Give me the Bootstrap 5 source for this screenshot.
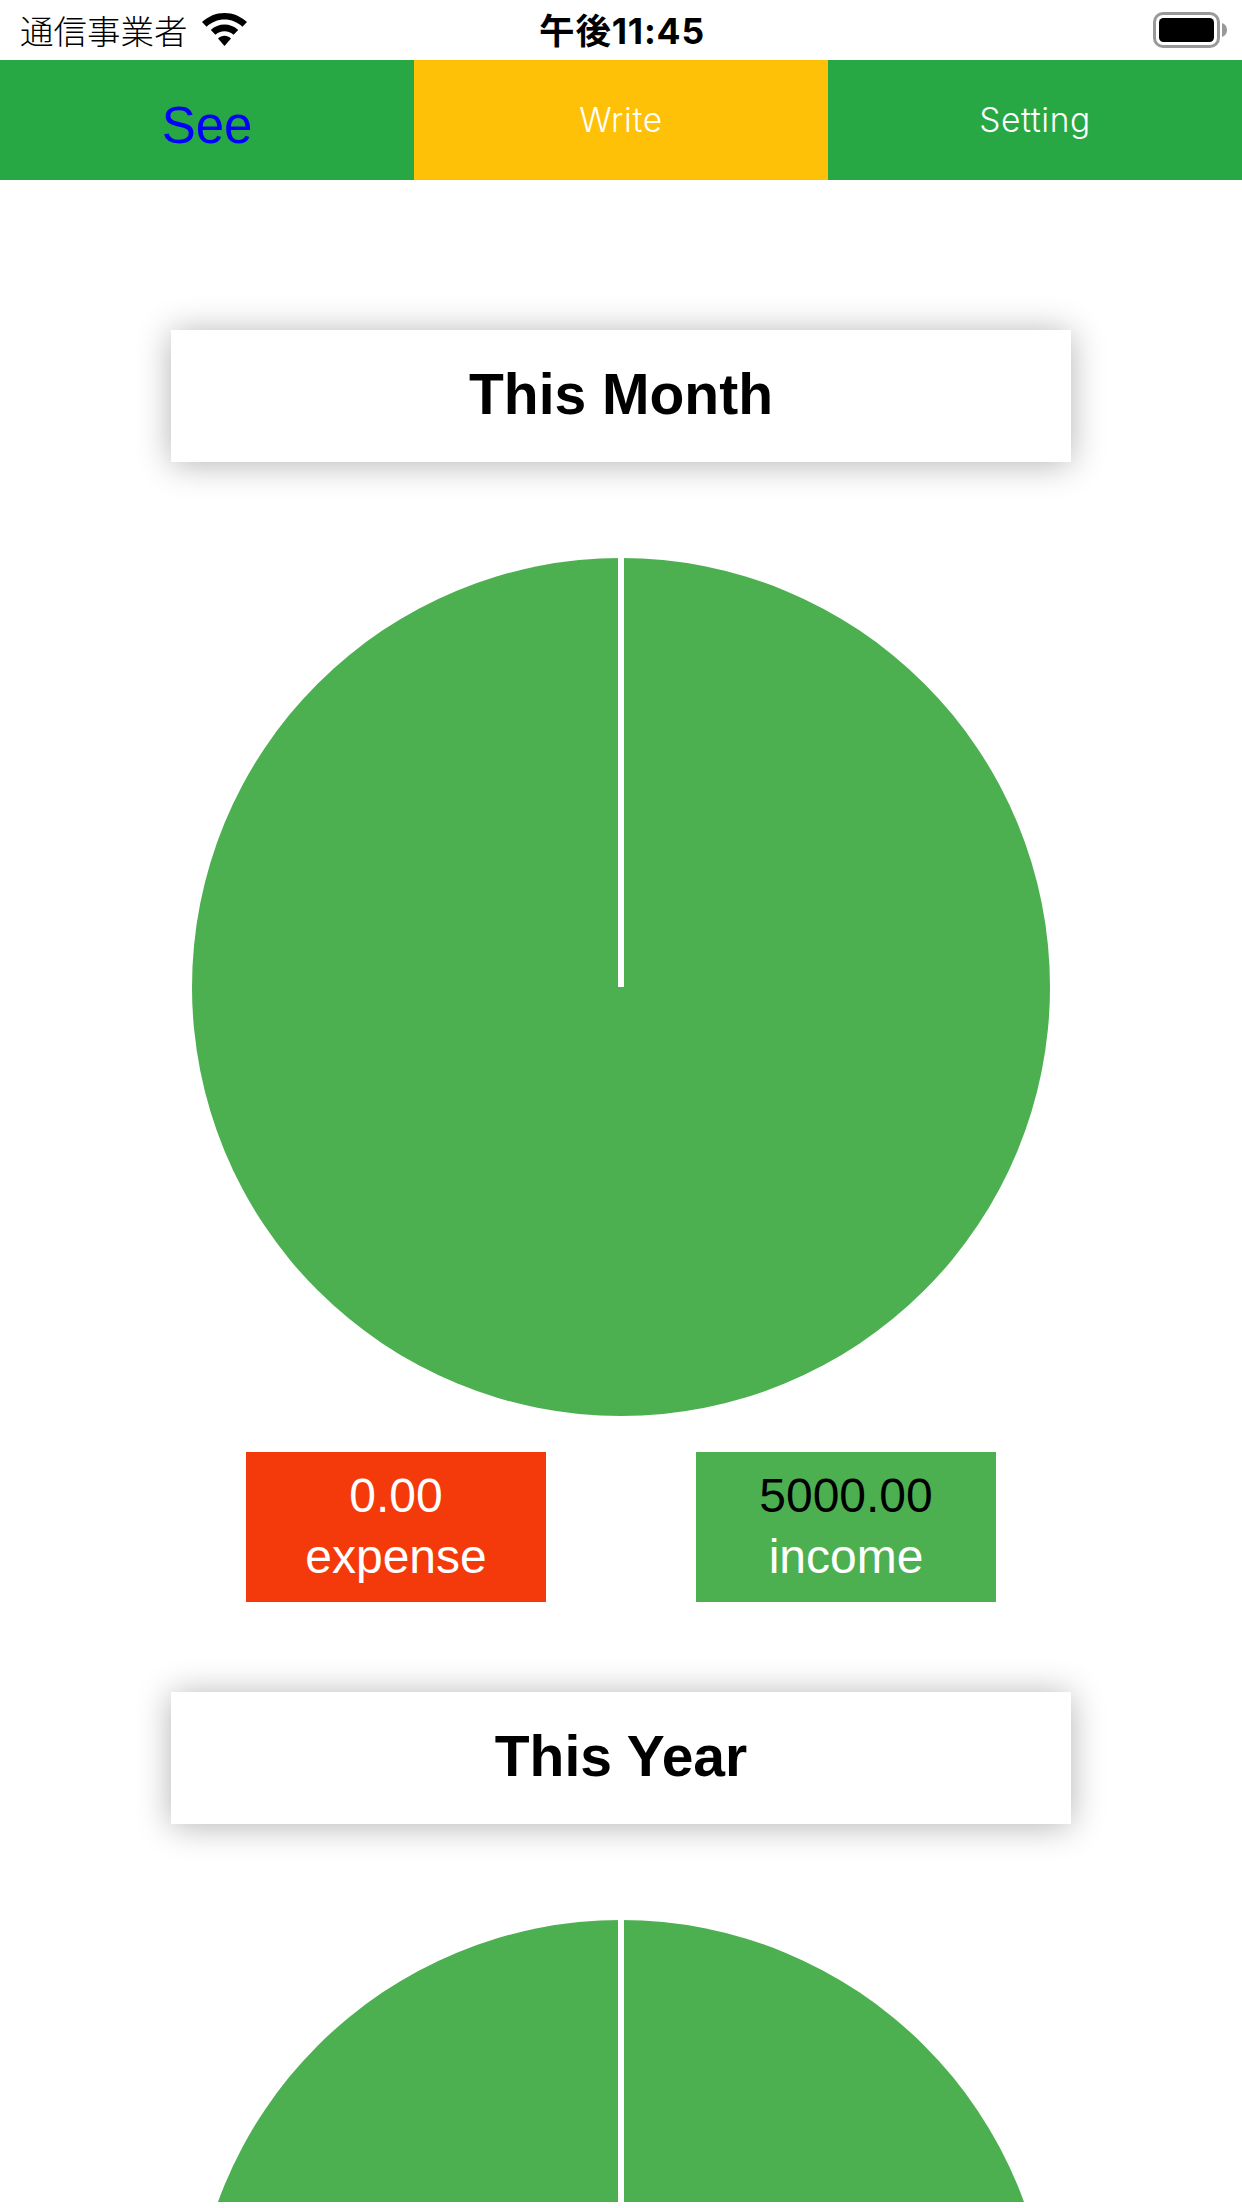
<!DOCTYPE html>
<html lang="ja">
<head>
<meta charset="utf-8">
<title>Summary</title>
<link href="https://cdn.jsdelivr.net/npm/bootstrap@5.3.0/dist/css/bootstrap.min.css" rel="stylesheet">
<style>
html, body { margin: 0; background: #fff; }
body { width: 1242px; height: 2208px; overflow: hidden; font-family: "Liberation Sans", Arial, sans-serif; color: #000; }
.status-strip { height: 60px; padding: 0 15px 0 20px; }
.carrier { font: 300 33.500px/60px "Noto Sans CJK JP", sans-serif; white-space: nowrap; }
.wifi-ico { width: 45px; height: 33px; margin-left: 14px; margin-top: -1px; }
.clock { font: 700 35.500px/60px Inter, "Noto Sans CJK JP", sans-serif; letter-spacing: .8px; margin-right: 3px; padding-top: 3px; }
.status-side { width: 330px; }
.batt-ico { width: 74px; height: 36px; margin-top: 0; }
.tab-strip { height: 120px; }
.tab-cell { flex: 1 1 0; height: 120px; display: flex; align-items: center; justify-content: center; color: #fff; font: 300 33.500px Inter, sans-serif; letter-spacing: .6px; }
.tab-green { background: #28a745; }
.tab-amber { background: #ffc107; }
.tab-see { color: #00f; font: 400 51px "Liberation Sans", sans-serif; letter-spacing: 0; padding-top: 10px; }
.sheet { padding-top: 150px; }
.head-panel { width: 900px; height: 132px; background: #fff; box-shadow: 0 2px 32px rgba(0,0,0,.3); font: 700 57px/129px "Liberation Sans", sans-serif; text-align: center; }
.pie-wrap { width: 858px; height: 858px; margin-top: 96px; }
.pie-wrap svg { display: block; }
.tot-row { margin-top: 36px; gap: 150px; }
.tot-box { width: 300px; height: 150px; font: 400 48px/61px "Liberation Sans", sans-serif; color: #fff; text-align: center; padding-top: 13px; }
.tot-red { background: #f4390b; }
.tot-green { background: #4caf50; }
.tot-dark { color: #000; }
.year-panel { margin-top: 90px; }
.pie-clip { height: 282px; overflow: hidden; }
</style>
</head>
<body>
<div class="status-strip d-flex align-items-center justify-content-between">
  <div class="status-side d-flex align-items-center">
    <span class="carrier">通信事業者</span>
    <svg class="wifi-ico" viewBox="0 0 45 33"><path fill="#000" d="M22.500 0C14 0 6.400 3.300 0 9l4.600 4.800C9.500 9.300 15.700 6.600 22.500 6.600s13 2.700 17.900 7.200L45 9C38.600 3.300 31 0 22.500 0z"/><path fill="#000" d="M22.500 11.500c-5.100 0-9.900 2-13.700 5.400l4.600 4.800c2.500-2.200 5.600-3.500 9.100-3.500s6.600 1.300 9.100 3.500l4.600-4.800c-3.800-3.400-8.600-5.400-13.700-5.400z"/><path fill="#000" d="M22.500 22.800c-2.400 0-4.600.9-6.500 2.700l6.500 7.500 6.500-7.500c-1.900-1.800-4.100-2.700-6.500-2.700z"/></svg>
  </div>
  <div class="clock">午後11:45</div>
  <div class="status-side d-flex justify-content-end">
    <svg class="batt-ico" viewBox="0 0 74 36"><rect x="1.500" y="1.500" width="64" height="33" rx="8.500" fill="none" stroke="#999" stroke-width="3"/><rect x="6" y="6" width="55" height="24" rx="4.500" fill="#000"/><path fill="#999" d="M69 11c3 1 5 3.500 5 7s-2 6-5 7z"/></svg>
  </div>
</div>
<nav class="tab-strip d-flex">
  <div class="tab-cell tab-green tab-see">See</div>
  <div class="tab-cell tab-amber">Write</div>
  <div class="tab-cell tab-green">Setting</div>
</nav>
<main class="sheet d-flex flex-column align-items-center">
  <div class="head-panel">This Month</div>
  <div class="pie-wrap">
    <svg width="858" height="858" viewBox="0 0 858 858"><circle cx="429" cy="429" r="429" fill="#4caf50"/><rect x="426" y="0" width="6" height="429" fill="#fff"/></svg>
  </div>
  <div class="tot-row d-flex">
    <div class="tot-box tot-red">0.00<br>expense</div>
    <div class="tot-box tot-green"><span class="tot-dark">5000.00</span><br>income</div>
  </div>
  <div class="head-panel year-panel">This Year</div>
  <div class="pie-wrap pie-clip">
    <svg width="858" height="858" viewBox="0 0 858 858"><circle cx="429" cy="429" r="429" fill="#4caf50"/><rect x="426" y="0" width="6" height="429" fill="#fff"/></svg>
  </div>
</main>
<script src="https://cdn.jsdelivr.net/npm/bootstrap@5.3.0/dist/js/bootstrap.bundle.min.js"></script>
</body>
</html>
